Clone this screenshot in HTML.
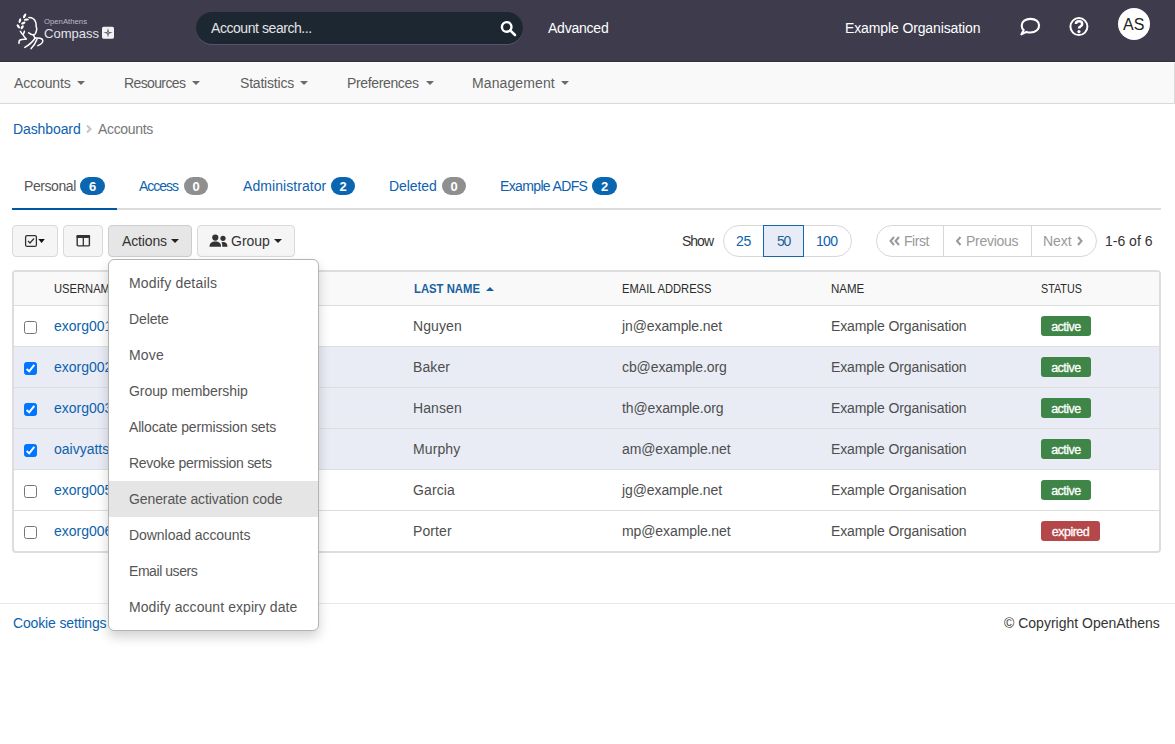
<!DOCTYPE html>
<html><head><meta charset="utf-8">
<style>
*{box-sizing:border-box;margin:0;padding:0}
html,body{width:1175px;height:744px;overflow:hidden;background:#fff}
body{font-family:"Liberation Sans",sans-serif;font-size:14px;color:#333;position:relative}
.a{position:absolute;white-space:nowrap;line-height:16px}
#hdr{position:absolute;left:0;top:0;width:1175px;height:62px;background:#3d3b4c;border-bottom:1px solid #302e3f}
#search{position:absolute;left:196px;top:12px;width:327px;height:32px;border-radius:16px;background:#1d2732;box-shadow:0 1px 0 #55546a}
#nav{position:absolute;left:0;top:62px;width:1175px;height:42px;background:#f9f9f9;border-top:1px solid #fefefe;border-bottom:1px solid #dadada;border-right:1px solid #dadada}
.nv{color:#5e5e5e;font-size:14px}
.cr.n{color:#6a6a6a}
.cr{position:absolute}
.caret{display:inline-block;width:0;height:0;border-left:4px solid transparent;border-right:4px solid transparent;border-top:4px solid currentColor;vertical-align:middle}
.lnk{color:#0c62ae}
.bdg{position:absolute;height:18px;border-radius:9px;color:#fff;font-weight:bold;font-size:13px;line-height:20px;text-align:center}
.btn{position:absolute;top:225px;height:32px;border:1px solid #d9d9d9;border-radius:4px;background:#f5f5f5}
#tbl{position:absolute;left:12px;top:270px;width:1149px;height:283px;border:2px solid #dddddd;border-radius:4px;overflow:hidden}
.th{position:absolute;top:9px;font-size:13px;color:#2b2b2b;line-height:16px;white-space:nowrap;transform-origin:0 0}
.c3{left:399px;letter-spacing:0.1px}.c4{left:608px;letter-spacing:-0.1px}.c5{left:817px;letter-spacing:-0.11px}
.row{position:absolute;left:0;width:1145px;height:41px;border-bottom:1px solid #dedede}
.sel{background:#e9ecf5}
.cb{position:absolute;left:10px;top:15px;width:13px;height:13px;border:1px solid #767676;border-radius:2.5px;background:#fff}
.cb.on{background:#0075ff;border-color:#0075ff}
.td{position:absolute;top:12px;line-height:16px;white-space:nowrap;color:#4e4e4e}
.td.lnk{color:#0c62ae}
.st{position:absolute;left:1027px;top:10px;height:20px;border-radius:3px;color:#fff;font-size:12.5px;font-weight:normal;line-height:23px;text-align:center;letter-spacing:-0.5px;-webkit-text-stroke:0.3px #fff}
#menu{position:absolute;left:108px;top:259px;width:211px;height:372px;background:#fff;border:1px solid #b4b4b4;border-radius:6px;box-shadow:0 6px 12px rgba(0,0,0,.175)}
.mi{position:absolute;left:0;width:209px;height:36px;line-height:36px;padding-left:20px;color:#555;white-space:nowrap}
</style></head><body>

<div id="hdr">
  <svg style="position:absolute;left:0;top:0" width="120" height="62" viewBox="0 0 120 62">
    <g fill="none" stroke="#fff" stroke-width="1.5" stroke-linecap="round" stroke-linejoin="round">
      <path d="M28.9 17.6 C32 17.6 34.8 19.3 35.8 22.6 C36.3 24.5 36 26 36.3 27.3 C36.8 28.4 37.2 29.2 36.6 30.2 C36.1 31 36.2 32.4 35.4 33.6 C34.6 34.7 33 35 31.8 34.6 C30.7 34.2 29.8 33.4 28.6 32.8"/>
      <path d="M33.4 34.6 L34.8 38"/>
      <path d="M20.4 31.3 C21.2 32.6 22 33.8 23 34.8 M24.4 31.2 C24.2 32.6 23.6 33.8 23 34.8 C24 36.3 25 37.6 26.2 38.9"/>
      <path d="M19 43.3 C18.8 41.5 19.4 40.2 20.6 39.8 C22.4 39.2 24.3 39.2 26.2 38.9"/>
      <path d="M24.8 47.4 C28.6 45.2 32.8 41.8 35.2 38"/>
      <path d="M31.1 48.6 C33.6 46 35.8 42.6 37 39.3"/>
      <path d="M35.2 38 C38.4 37.6 42.6 38.4 42.8 40.4 C43 42.4 40.4 44.6 37.9 45.6"/>
    </g>
    <g fill="#fff">
      <ellipse cx="24.6" cy="15.9" rx="1.2" ry="2.6" transform="rotate(28 24.6 15.9)"/>
      <ellipse cx="26.4" cy="19.6" rx="2.5" ry="1.15" transform="rotate(-8 26.4 19.6)"/>
      <ellipse cx="19.9" cy="20.6" rx="1.15" ry="2.4" transform="rotate(18 19.9 20.6)"/>
      <ellipse cx="23.3" cy="23.1" rx="2.3" ry="1.15" transform="rotate(-25 23.3 23.1)"/>
      <ellipse cx="18.3" cy="26.4" rx="1.15" ry="2.4" transform="rotate(-35 18.3 26.4)"/>
      <ellipse cx="22.2" cy="27.2" rx="1.2" ry="2.2" transform="rotate(35 22.2 27.2)"/>
    </g>
    <text x="44" y="23.6" font-family="Liberation Sans" font-size="7.4" fill="#bdbcc7" textLength="43" lengthAdjust="spacingAndGlyphs">OpenAthens</text>
    <text x="44" y="37.7" font-family="Liberation Sans" font-size="13.6" fill="#e4e4ea" textLength="55" lengthAdjust="spacingAndGlyphs">Compass</text>
    <rect x="102" y="26.7" width="12" height="12" rx="1.6" fill="#f2f2f5"/>
    <path d="M108 28 L108.8 31.9 L112.6 32.7 L108.8 33.5 L108 37.4 L107.2 33.5 L103.4 32.7 L107.2 31.9 Z" fill="#3d3b4c"/>
    <circle cx="108" cy="32.7" r="0.7" fill="#f2f2f5"/>
  </svg>
  <div id="search"></div>
  <div class="a" id="srch" style="left:211px;top:20px;color:#e3e3e6;font-size:14px;letter-spacing:-0.438px">Account search...</div>
  <svg style="position:absolute;left:498px;top:18px" width="20" height="20" viewBox="0 0 20 20">
    <circle cx="8.7" cy="8.9" r="4.8" fill="none" stroke="#fff" stroke-width="2.4"/>
    <path d="M12.2 12.4 L17 17" stroke="#fff" stroke-width="2.6" stroke-linecap="round"/>
  </svg>
  <div class="a" id="adv" style="left:548px;top:20px;color:#fff;font-size:14px;letter-spacing:-0.229px">Advanced</div>
  <div class="a" id="eorg" style="left:845px;top:20px;color:#fff;font-size:14px;letter-spacing:-0.121px">Example Organisation</div>
  <svg style="position:absolute;left:1015px;top:12px" width="30" height="30" viewBox="0 0 30 30">
    <path d="M11.4 19.9 C12.7 20.3 14.1 20.5 15.5 20.5 C20.4 20.5 24.1 17.4 24.1 13.4 C24.1 9.5 20.4 6.9 15.5 6.9 C10.6 6.9 6.7 9.5 6.7 13.4 C6.7 15.3 7.4 16.9 8.7 18.1 L6.4 22.4 Z" fill="none" stroke="#fff" stroke-width="2.1" stroke-linejoin="round"/>
  </svg>
  <svg style="position:absolute;left:1064px;top:12px" width="30" height="30" viewBox="0 0 30 30">
    <circle cx="14.9" cy="14.6" r="8.5" fill="none" stroke="#fff" stroke-width="2"/>
    <path d="M11.9 12.1 C11.9 10.1 13.2 9.2 15 9.2 C16.9 9.2 18.2 10.3 18.2 11.9 C18.2 13.4 17.1 14 16.2 14.6 C15.4 15.1 15 15.5 15 16.6" fill="none" stroke="#fff" stroke-width="2.5" stroke-linecap="butt"/>
    <circle cx="14.95" cy="19.6" r="1.6" fill="#fff"/>
  </svg>
  <div style="position:absolute;left:1118px;top:8px;width:32px;height:32px;border-radius:50%;background:#fff"></div>
  <div class="a" id="avt" style="left:1123px;top:16px;color:#222;font-size:16px;line-height:18px">AS</div>
</div>

<div id="nav">
  <div class="a nv" id="nav1" style="left:14px;top:12px;letter-spacing:-0.114px">Accounts</div><span class="caret cr n" style="left:77px;top:18px"></span>
  <div class="a nv" id="nav2" style="left:124px;top:12px;letter-spacing:-0.625px">Resources</div><span class="caret cr n" style="left:192px;top:18px"></span>
  <div class="a nv" id="nav3" style="left:240px;top:12px;letter-spacing:-0.2px">Statistics</div><span class="caret cr n" style="left:300px;top:18px"></span>
  <div class="a nv" id="nav4" style="left:347px;top:12px;letter-spacing:-0.36px">Preferences</div><span class="caret cr n" style="left:426px;top:18px"></span>
  <div class="a nv" id="nav5" style="left:472px;top:12px;letter-spacing:0.111px">Management</div><span class="caret cr n" style="left:561px;top:18px"></span>
</div>

<div class="a lnk" id="crumb1" style="left:13px;top:121px;letter-spacing:-0.1px">Dashboard</div>
<svg style="position:absolute;left:85px;top:124px" width="8" height="10" viewBox="0 0 8 10"><path d="M2 1.5 L5.5 5 L2 8.5" fill="none" stroke="#c4c4c4" stroke-width="2"/></svg>
<div class="a" id="crumb2" style="left:98px;top:121px;color:#777;letter-spacing:-0.343px">Accounts</div>

<!-- tabs -->
<div class="a" id="tab1" style="left:24px;top:178px;color:#555;letter-spacing:-0.428px">Personal</div>
<div class="bdg" style="left:80px;top:177px;width:25px;background:#0a66b0">6</div>
<div class="a lnk" id="tab2" style="left:139px;top:178px;letter-spacing:-1.0px">Access</div>
<div class="bdg" style="left:184px;top:177px;width:24px;background:#8f8f8f">0</div>
<div class="a lnk" id="tab3" style="left:243px;top:178px;letter-spacing:0.066px">Administrator</div>
<div class="bdg" style="left:331px;top:177px;width:24px;background:#0a66b0">2</div>
<div class="a lnk" id="tab4" style="left:389px;top:178px;letter-spacing:-0.066px">Deleted</div>
<div class="bdg" style="left:442px;top:177px;width:24px;background:#8f8f8f">0</div>
<div class="a lnk" id="tab5" style="left:500px;top:178px;letter-spacing:-0.637px">Example ADFS</div>
<div class="bdg" style="left:592px;top:177px;width:25px;background:#0a66b0">2</div>
<div style="position:absolute;left:12px;top:208px;width:1149px;height:2px;background:#dcdcdc"></div>
<div style="position:absolute;left:12px;top:208px;width:105px;height:2px;background:#0057a6"></div>

<!-- toolbar -->
<div class="btn" style="left:12px;width:46px"></div>
<svg style="position:absolute;left:24px;top:233px" width="22" height="16" viewBox="0 0 22 16">
  <rect x="1.6" y="2.6" width="10.8" height="10.8" rx="1.5" fill="none" stroke="#333" stroke-width="1.3"/>
  <path d="M4 8 L6 10 L10 5.5" fill="none" stroke="#333" stroke-width="1.3"/>
  <path d="M14.3 6 L20.8 6 L17.55 10 Z" fill="#111"/>
</svg>
<div class="btn" style="left:63px;width:40px"></div>
<svg style="position:absolute;left:76px;top:234px" width="15" height="14" viewBox="0 0 15 14">
  <rect x="1.2" y="1.6" width="12.2" height="10.3" rx="1" fill="none" stroke="#333" stroke-width="1.4"/>
  <rect x="0.5" y="0.9" width="13.6" height="3" rx="1" fill="#333"/>
  <rect x="6.65" y="1" width="1.3" height="11" fill="#333"/>
</svg>
<div class="btn" style="left:108px;width:84px;background:#e6e6e6;border-color:#cdcdcd"></div>
<div class="a" id="act" style="left:122px;top:233px;color:#333;letter-spacing:-0.133px">Actions</div><span class="caret cr" style="left:171px;top:239px;color:#222"></span>
<div class="btn" style="left:197px;width:98px"></div>
<svg style="position:absolute;left:209px;top:234px" width="20" height="14" viewBox="0 0 20 14">
  <circle cx="6.3" cy="3.6" r="3.1" fill="#333"/>
  <path d="M0.5 12.8 C0.5 9.2 2.8 7.6 6.3 7.6 C9.8 7.6 12.1 9.2 12.1 12.8 Z" fill="#333"/>
  <circle cx="14" cy="4.3" r="2.6" fill="#333"/>
  <path d="M12.6 8 C13.1 7.9 13.6 7.9 14.1 7.9 C17 7.9 18.5 9.5 18.5 12.8 L13.3 12.8 C13.3 10.8 13.1 9.2 12.6 8 Z" fill="#333"/>
</svg>
<div class="a" id="grp" style="left:231px;top:233px;color:#333;letter-spacing:0.0px">Group</div><span class="caret cr" style="left:274px;top:239px;color:#222"></span>

<div class="a" id="show" style="left:682px;top:233px;color:#333;letter-spacing:-1.0px">Show</div>
<div style="position:absolute;left:723px;top:225px;width:129px;height:32px;border:1px solid #d8d8d8;border-radius:16px"></div>
<div style="position:absolute;left:763px;top:225px;width:41px;height:32px;border:1px solid #1565a8;background:#e8ecf6"></div>
<div class="a lnk" id="p25" style="left:736px;top:233px;letter-spacing:-0.2px">25</div>
<div class="a" id="p50" style="left:777px;top:233px;color:#1f5f9a;letter-spacing:-1.4px">50</div>
<div class="a lnk" id="p100" style="left:816px;top:233px;letter-spacing:-0.7px">100</div>

<div style="position:absolute;left:876px;top:225px;width:221px;height:32px;border:1px solid #d8d8d8;border-radius:16px"></div>
<div style="position:absolute;left:943px;top:225px;width:1px;height:32px;background:#d8d8d8"></div>
<div style="position:absolute;left:1031px;top:225px;width:1px;height:32px;background:#d8d8d8"></div>
<svg style="position:absolute;left:888px;top:235px" width="14" height="12" viewBox="0 0 14 12"><path d="M6 2 L2.5 6 L6 10 M11 2 L7.5 6 L11 10" fill="none" stroke="#999" stroke-width="2"/></svg>
<div class="a" id="first" style="left:904px;top:233px;color:#999;letter-spacing:-0.45px">First</div>
<svg style="position:absolute;left:954px;top:235px" width="10" height="12" viewBox="0 0 10 12"><path d="M6.5 2 L3 6 L6.5 10" fill="none" stroke="#999" stroke-width="2"/></svg>
<div class="a" id="prev" style="left:966px;top:233px;color:#999;letter-spacing:-0.271px">Previous</div>
<div class="a" id="next" style="left:1043px;top:233px;color:#999;letter-spacing:-0.067px">Next</div>
<svg style="position:absolute;left:1075px;top:235px" width="10" height="12" viewBox="0 0 10 12"><path d="M3 2 L6.5 6 L3 10" fill="none" stroke="#999" stroke-width="2"/></svg>
<div class="a" id="cnt" style="left:1105px;top:233px;color:#333">1-6 of 6</div>

<!-- table -->
<div id="tbl">
  <div style="position:absolute;left:0;top:0;width:1145px;height:34px;background:#f9f9f9;border-bottom:1px solid #dcdcdc"></div>
  <div class="th" id="th1" style="left:40px;transform:scaleX(0.86)">USERNAME</div>
  <div class="th" style="left:190px">FIRST NAME</div>
  <div class="th" id="th3" style="left:400px;color:#1a5fa0;font-weight:bold;transform:scaleX(0.87)">LAST NAME</div><span class="caret cr" style="left:472px;top:15px;border-top:0;border-bottom:4px solid #1a5fa0"></span>
  <div class="th" id="th4" style="left:608px;transform:scaleX(0.858)">EMAIL ADDRESS</div>
  <div class="th" id="th5" style="left:817px;transform:scaleX(0.887)">NAME</div>
  <div class="th" id="th6" style="left:1027px;transform:scaleX(0.827)">STATUS</div>
  <div class="row" style="top:34px"><div class="cb"></div><div class="td lnk" style="left:40px">exorg001</div><div class="td" style="left:190px">Jordan</div><div class="td c3" id="ln1">Nguyen</div><div class="td c4" id="em1">jn@example.net</div><div class="td c5" id="org1">Example Organisation</div><div class="st" style="width:50px;background:#3f8548"><span id=st1>active</span></div></div>
  <div class="row sel" style="top:75px"><div class="cb on"><svg width="13" height="13" viewBox="0 0 13 13" style="position:absolute;left:-1px;top:-1px"><path d="M2.6 7.1 L5.2 9.4 L10.3 2.9" fill="none" stroke="#fff" stroke-width="2"/></svg></div><div class="td lnk" style="left:40px">exorg002</div><div class="td" style="left:190px">Chris</div><div class="td c3">Baker</div><div class="td c4" id="em2">cb@example.org</div><div class="td c5">Example Organisation</div><div class="st" style="width:50px;background:#3f8548"><span>active</span></div></div>
  <div class="row sel" style="top:116px"><div class="cb on"><svg width="13" height="13" viewBox="0 0 13 13" style="position:absolute;left:-1px;top:-1px"><path d="M2.6 7.1 L5.2 9.4 L10.3 2.9" fill="none" stroke="#fff" stroke-width="2"/></svg></div><div class="td lnk" style="left:40px">exorg003</div><div class="td" style="left:190px">Tom</div><div class="td c3">Hansen</div><div class="td c4">th@example.org</div><div class="td c5">Example Organisation</div><div class="st" style="width:50px;background:#3f8548"><span>active</span></div></div>
  <div class="row sel" style="top:157px"><div class="cb on"><svg width="13" height="13" viewBox="0 0 13 13" style="position:absolute;left:-1px;top:-1px"><path d="M2.6 7.1 L5.2 9.4 L10.3 2.9" fill="none" stroke="#fff" stroke-width="2"/></svg></div><div class="td lnk" style="left:40px">oaivyatts</div><div class="td" style="left:190px">Alex</div><div class="td c3">Murphy</div><div class="td c4">am@example.net</div><div class="td c5">Example Organisation</div><div class="st" style="width:50px;background:#3f8548"><span>active</span></div></div>
  <div class="row" style="top:198px"><div class="cb"></div><div class="td lnk" style="left:40px">exorg005</div><div class="td" style="left:190px">Jo</div><div class="td c3">Garcia</div><div class="td c4">jg@example.net</div><div class="td c5">Example Organisation</div><div class="st" style="width:50px;background:#3f8548"><span>active</span></div></div>
  <div class="row" style="top:239px;border-bottom:0"><div class="cb"></div><div class="td lnk" style="left:40px">exorg006</div><div class="td" style="left:190px">Max</div><div class="td c3">Porter</div><div class="td c4">mp@example.net</div><div class="td c5">Example Organisation</div><div class="st" style="width:59px;background:#b4474a"><span>expired</span></div></div>
</div>

<!-- footer -->
<div style="position:absolute;left:0;top:603px;width:1175px;height:1px;background:#e8e8e8"></div>
<div class="a lnk" id="cookie" style="left:13px;top:615px;letter-spacing:-0.15px">Cookie settings</div>
<div class="a lnk" style="left:124px;top:615px">Privacy policy</div>
<div class="a" id="copy" style="left:1004px;top:615px;color:#333">© Copyright OpenAthens</div>

<!-- dropdown -->
<div id="menu">
  <div class="mi" style="top:5px"><span id="mi0" style="letter-spacing:0.185px">Modify details</span></div>
  <div class="mi" style="top:41px"><span id="mi1" style="letter-spacing:-0.12px">Delete</span></div>
  <div class="mi" style="top:77px"><span id="mi2" style="letter-spacing:0.2px">Move</span></div>
  <div class="mi" style="top:113px"><span id="mi3" style="letter-spacing:-0.067px">Group membership</span></div>
  <div class="mi" style="top:149px"><span id="mi4" style="letter-spacing:-0.165px">Allocate permission sets</span></div>
  <div class="mi" style="top:185px"><span id="mi5" style="letter-spacing:-0.267px">Revoke permission sets</span></div>
  <div class="mi" style="top:221px;background:#e5e5e5"><span id="mi6" style="letter-spacing:-0.096px">Generate activation code</span></div>
  <div class="mi" style="top:257px"><span id="mi7" style="letter-spacing:-0.05px">Download accounts</span></div>
  <div class="mi" style="top:293px"><span id="mi8" style="letter-spacing:-0.44px">Email users</span></div>
  <div class="mi" style="top:329px"><span id="mi9" style="letter-spacing:0.072px">Modify account expiry date</span></div>
</div>
</body></html>
